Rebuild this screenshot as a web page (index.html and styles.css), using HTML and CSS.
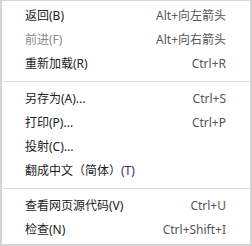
FILE: index.html
```html
<!DOCTYPE html>
<html lang="zh-CN">
<head>
<meta charset="utf-8">
<link rel="stylesheet" href="styles.css">
</head>
<body>
<div class="menu">
  <div class="item"><span class="label">返回(B)</span><span class="key">Alt+向左箭头</span></div>
  <div class="item disabled"><span class="label">前进(F)</span><span class="key">Alt+向右箭头</span></div>
  <div class="item"><span class="label">重新加载(R)</span><span class="key">Ctrl+R</span></div>
  <div class="sep"></div>
  <div class="item"><span class="label">另存为(A)...</span><span class="key">Ctrl+S</span></div>
  <div class="item"><span class="label">打印(P)...</span><span class="key">Ctrl+P</span></div>
  <div class="item"><span class="label">投射(C)...</span><span class="key"></span></div>
  <div class="item"><span class="label">翻成中文（简体）<span class="accent">(T)</span></span><span class="key"></span></div>
  <div class="sep"></div>
  <div class="item"><span class="label">查看网页源代码(V)</span><span class="key">Ctrl+U</span></div>
  <div class="item"><span class="label">检查(N)</span><span class="key">Ctrl+Shift+I</span></div>
</div>
</body>
</html>
```
FILE: styles.css
```css
html, body {
  margin: 0;
  padding: 0;
  background: #ffffff;
}
.menu {
  box-sizing: border-box;
  width: 252px;
  height: 246px;
  border: 1px solid #d4d4d4;
  border-left-width: 2px;
  border-right-width: 2px;
  border-bottom-width: 2px;
  padding: 3px 0 2px 0;
  background: #ffffff;
  font-family: "Noto Sans", "Noto Sans CJK SC", sans-serif;
  font-size: 12px;
  color: #222222;
  display: flex;
  flex-direction: column;
}
.item {
  height: 24px;
  display: flex;
  align-items: center;
  justify-content: space-between;
  padding: 0 24px 0 23px;
  line-height: 24px;
}
.item.disabled .label {
  color: #8a8a8a;
}
.key {
  color: #555555;
}
.accent {
  color: #3a2a6a;
}
.sep {
  height: 1px;
  background: #dcdcdc;
  margin: 5px 0;
}
```
